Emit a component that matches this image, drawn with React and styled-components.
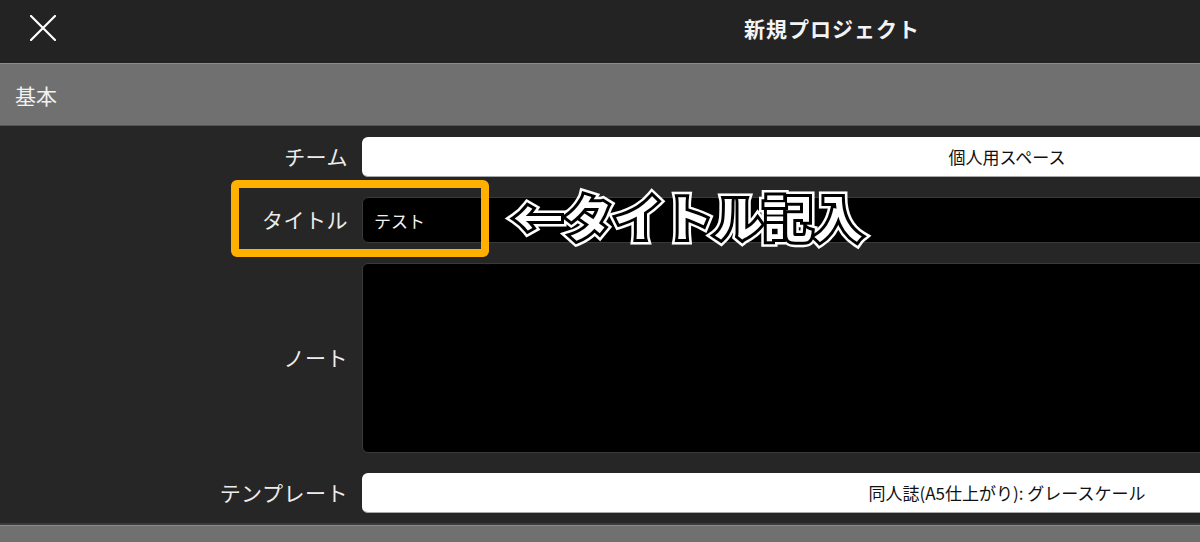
import styled, { createGlobalStyle } from 'styled-components'

const GlobalStyle = createGlobalStyle`
  html, body {
    margin: 0;
    padding: 0;
    background: #262626;
    overflow: hidden;
  }
  body {
    font-family: "Noto Sans CJK JP", "Noto Sans", sans-serif;
  }
`

const Screen = styled.div`
  position: relative;
  width: 1664px;
  height: 542px;
  background: #262626;
  color: #fff;
  display: flex;
  flex-direction: column;
`

const TopBar = styled.header`
  height: 63px;
  flex: none;
  background: #232323;
  border-bottom: 1px solid #8c8c8c;
  display: flex;
  align-items: center;
  justify-content: center;
  position: relative;
`

const CloseButton = styled.button`
  position: absolute;
  left: 28px;
  top: 13px;
  width: 30px;
  height: 30px;
  padding: 0;
  border: none;
  background: none;
  display: flex;
  align-items: center;
  justify-content: center;
`

const Title = styled.h1`
  margin: 0 0 7px;
  font-size: 21px;
  font-weight: 700;
  letter-spacing: 1px;
  color: #f4f4f4;
`

const SectionHeader = styled.div`
  height: 61px;
  flex: none;
  background: #707070;
  border-bottom: 1px solid #555;
  display: flex;
  align-items: center;
  padding-left: 15px;
  font-size: 21px;
  color: #f2f2f2;
`

const Form = styled.div`
  display: grid;
  grid-template-columns: 348px 1290px;
  column-gap: 14px;
  row-gap: 20px;
  padding: 11px 0 10px;
  align-items: center;
  border-bottom: 2px solid #3c3c3c;
`

const Label = styled.label`
  text-align: right;
  font-size: 21px;
  color: #ececec;
  letter-spacing: 0.5px;
  margin-bottom: 2px;
`

const Field = styled.div`
  height: ${p => p.$h}px;
  border-radius: 6px;
  box-sizing: border-box;
  display: flex;
  align-items: ${p => (p.$tall ? 'flex-start' : 'center')};
  justify-content: ${p => (p.$center ? 'center' : 'flex-start')};
  padding: 0 11px;
  font-size: 17px;
  background: ${p => (p.$light ? '#fff' : '#000')};
  color: ${p => (p.$light ? '#111' : '#f2f2f2')};
  border: ${p => (p.$light ? 'none' : '1px solid #3a3a3a')};
  border-bottom: ${p => (p.$light ? '1px solid #a8a8a8' : '1px solid #3a3a3a')};
`

const Footer = styled.div`
  flex: 1;
  background: #707070;
  border-top: 1px solid #8c8c8c;
`

const Highlight = styled.div`
  position: absolute;
  left: 231px;
  top: 180px;
  width: 258px;
  height: 77px;
  box-sizing: border-box;
  border: 8px solid #ffb000;
  border-radius: 6px;
`

const Note = styled.div`
  position: absolute;
  left: 513px;
  top: 180px;
  display: grid;
`

const NoteLayer = styled.span`
  grid-area: 1 / 1;
  font-size: 50px;
  font-weight: 700;
  line-height: 70px;
  white-space: nowrap;
  color: ${p => (p.$stroke ? 'transparent' : '#fff')};
  -webkit-text-stroke: ${p => (p.$stroke ? `${p.$width}px ${p.$stroke}` : '0')};
`

export default function App() {
  const note = '←タイトル記入'
  return (
    <>
      <GlobalStyle />
      <Screen>
        <TopBar>
          <CloseButton aria-label="閉じる">
            <svg width="26" height="26" viewBox="0 0 26 26">
              <path d="M1 1 L25 25 M25 1 L1 25" stroke="#fff" strokeWidth="2.2" strokeLinecap="round" />
            </svg>
          </CloseButton>
          <Title>新規プロジェクト</Title>
        </TopBar>
        <SectionHeader>基本</SectionHeader>
        <Form>
          <Label>チーム</Label>
          <Field $h={40} $light $center>個人用スペース</Field>
          <Label>タイトル</Label>
          <Field $h={46}>テスト</Field>
          <Label>ノート</Label>
          <Field $h={190} $tall />
          <Label>テンプレート</Label>
          <Field $h={40} $light $center>同人誌(A5仕上がり): グレースケール</Field>
        </Form>
        <Footer />
        <Highlight />
        <Note>
          <NoteLayer $stroke="#fff" $width={11} aria-hidden="true">{note}</NoteLayer>
          <NoteLayer $stroke="#000" $width={6} aria-hidden="true">{note}</NoteLayer>
          <NoteLayer>{note}</NoteLayer>
        </Note>
      </Screen>
    </>
  )
}
